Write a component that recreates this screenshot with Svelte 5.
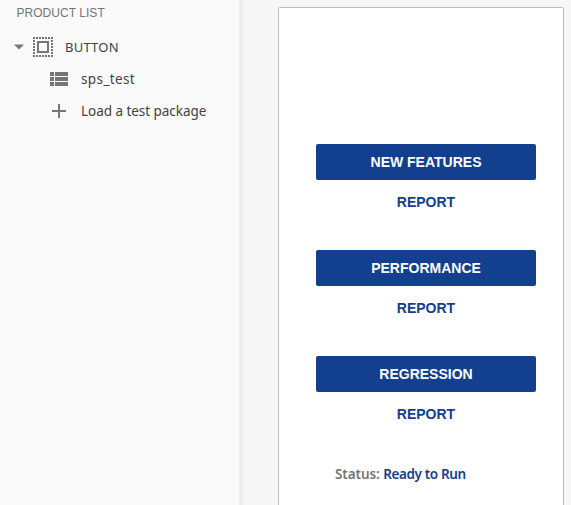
<script>
  const groups = ['NEW FEATURES', 'PERFORMANCE', 'REGRESSION'];
</script>

<div class="app">
  <aside class="sidebar">
    <h2>PRODUCT LIST</h2>
    <div class="row parent">
      <svg class="caret" width="10" height="6" viewBox="0 0 10 6"><path d="M0 .5h10L5 5.5z" /></svg>
      <svg width="20" height="20" viewBox="0 0 20 20" shape-rendering="crispEdges">
        <path d="M0 1h20M0 19h20M1 0v20M19 0v20" fill="none" stroke="#757575" stroke-width="2" stroke-dasharray="2 1" />
        <rect x="5" y="5" width="10" height="10" fill="none" stroke="#757575" stroke-width="2" />
      </svg>
      <span class="label root">BUTTON</span>
    </div>
    <div class="row child">
      <svg width="18" height="14" viewBox="0 0 18 14" shape-rendering="crispEdges">
        <path d="M0 0h4v4H0zM5 0h13v4H5zM0 5h4v4H0zM5 5h13v4H5zM0 10h4v4H0zM5 10h13v4H5z" />
      </svg>
      <span class="label package">sps_test</span>
    </div>
    <div class="row child">
      <svg width="18" height="14" viewBox="0 0 18 14" shape-rendering="crispEdges"><path d="M8 0h2v6h6v2h-6v6H8V8H2V6h6z" /></svg>
      <span class="label load">Load a test package</span>
    </div>
  </aside>
  <main>
    <section class="screen">
      {#each groups as name}
        <div class="group">
          <button class="primary">{name}</button>
          <button class="report">REPORT</button>
        </div>
      {/each}
      <p>Status: <b>Ready to Run</b></p>
    </section>
  </main>
</div>

<style>
  .app { display: flex; width: 571px; height: 505px; overflow: hidden; background: #f6f6f6; font-family: "Noto Sans", sans-serif; }
  .sidebar { box-sizing: border-box; width: 243px; flex: none; border-right: 4px solid #eee; background: #fafafa; }
  h2 { margin: 0; padding-left: 16.5px; height: 31px; font: 400 12px/26px "Liberation Sans", Arial, sans-serif; letter-spacing: .04px; color: #757575; }
  .row { display: flex; align-items: center; height: 32px; }
  .parent { padding-left: 14px; }
  .child { padding-left: 50px; }
  svg { flex: none; fill: #757575; }
  .caret { margin-right: 9px; }
  .label { margin-left: 13px; font-size: 14px; line-height: 20px; color: #424242; white-space: nowrap; }
  .root { margin-left: 12px; font-size: 13px; letter-spacing: .22px; }
  .package { font-size: 13.5px; letter-spacing: .38px; }
  .load { font-size: 13.5px; letter-spacing: -.04px; }
  main { flex: 1; padding: 7px 7px 0 35px; }
  .screen { box-sizing: border-box; width: 286px; height: 510px; padding: 136px 27px 0 37px; border: 1px solid #bdbdbd; border-radius: 2px; background: #fff; }
  .group { display: flex; flex-direction: column; height: 106px; }
  button { border: 0; padding: 0; font: 700 14px/36px "Liberation Sans", Arial, sans-serif; }
  .primary { height: 36px; border-radius: 2px; background: #12408f; color: #fff; }
  .report { height: 36px; margin-top: 4px; background: none; color: #12408f; }
  p { margin: 2px 0 0 19px; font-size: 13.5px; font-weight: 600; line-height: 20px; letter-spacing: -.08px; color: #757575; white-space: nowrap; }
  b { font-weight: 600; letter-spacing: -.38px; color: #12408f; }
</style>
